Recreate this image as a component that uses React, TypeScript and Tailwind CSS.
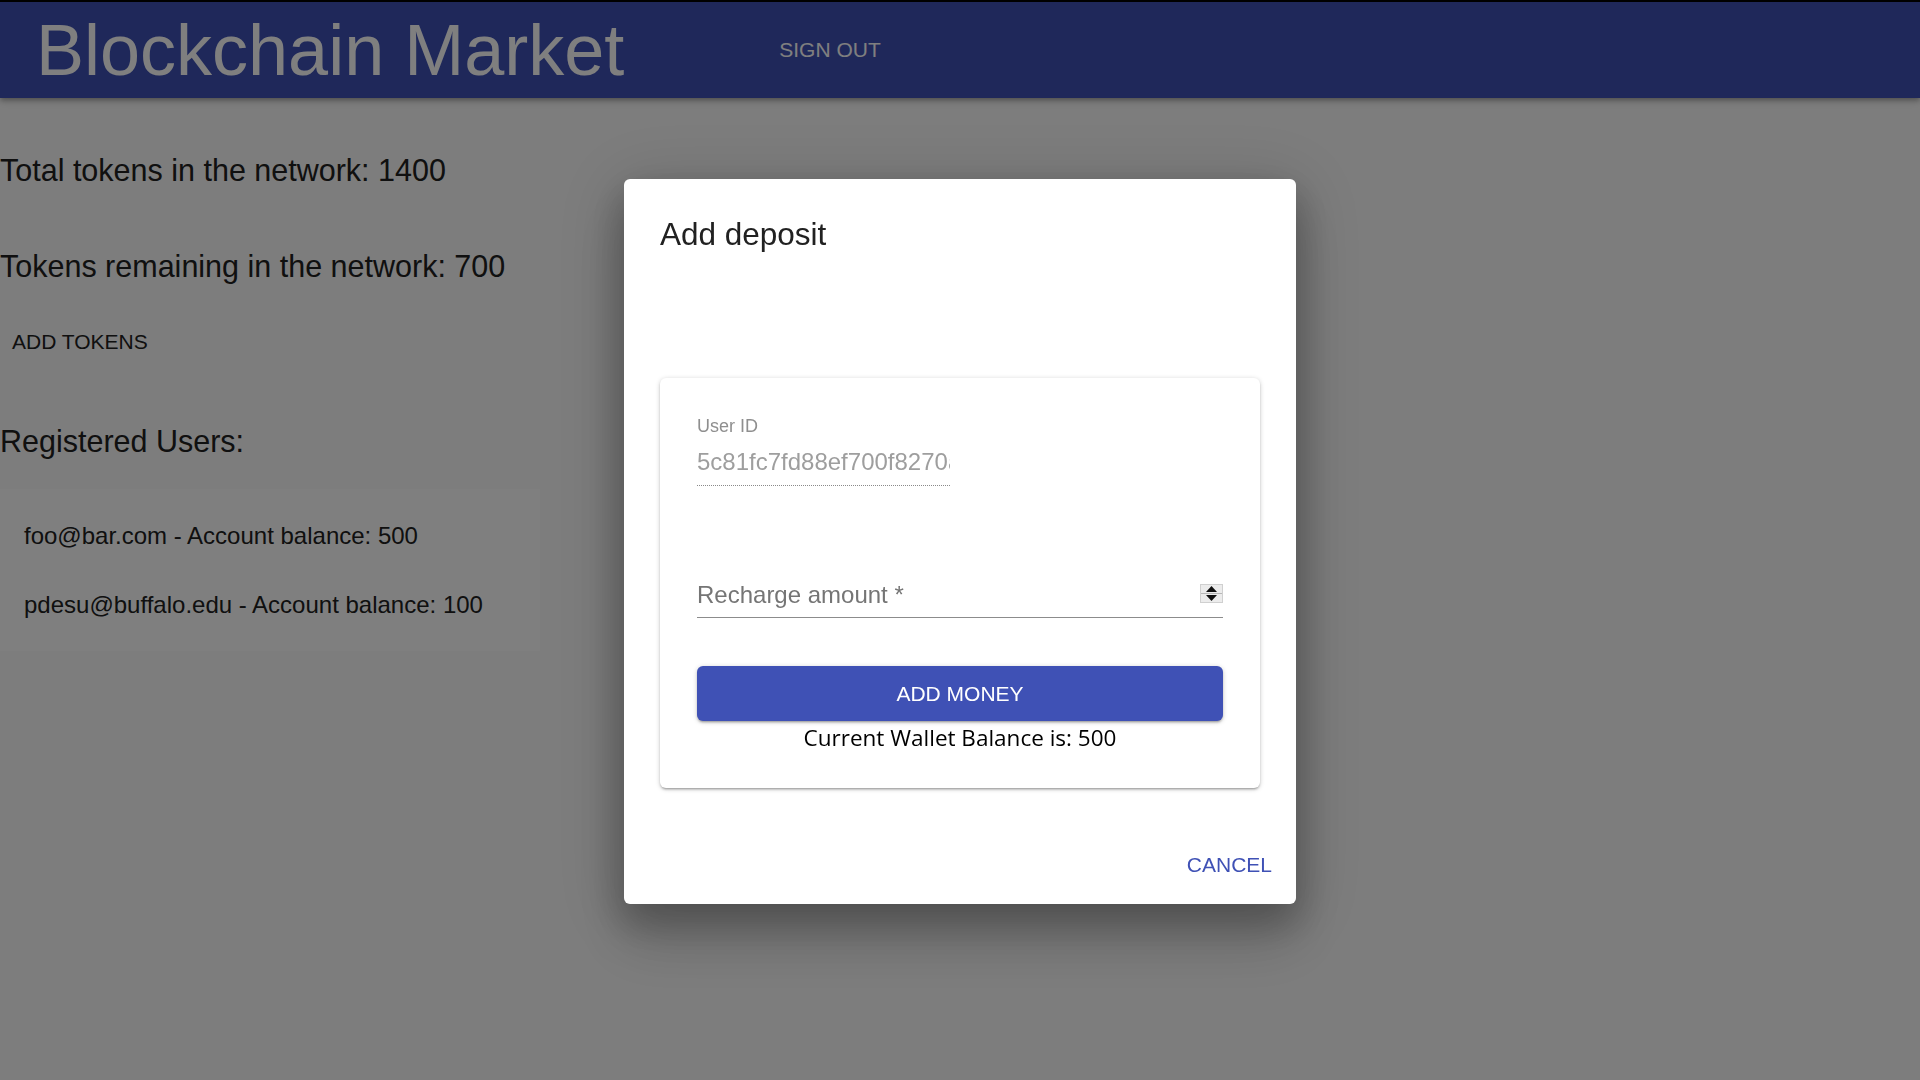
const users = [
  { email: "foo@bar.com", balance: 500 },
  { email: "pdesu@buffalo.edu", balance: 100 },
];

function Spinner() {
  return (
    <div className="flex h-[19px] w-[23px] flex-col border border-[#d0d0d0] bg-[#ececec]">
      <div className="flex flex-1 items-center justify-center border-b border-[#b8b8b8]">
        <svg width="11" height="6" viewBox="0 0 11 6">
          <path d="M5.5 0 L11 6 L0 6 Z" fill="#111" />
        </svg>
      </div>
      <div className="flex flex-1 items-center justify-center">
        <svg width="11" height="6" viewBox="0 0 11 6">
          <path d="M0 0 L11 0 L5.5 6 Z" fill="#111" />
        </svg>
      </div>
    </div>
  );
}

function DepositDialog() {
  return (
    <div className="fixed inset-0 flex items-center justify-center bg-black/50 pt-[3px]">
      <div className="flex w-[672px] flex-col rounded-[6px] bg-white px-[36px] shadow-[0_16px_36px_3px_rgba(0,0,0,0.2),0_36px_57px_4px_rgba(0,0,0,0.14),0_9px_69px_12px_rgba(0,0,0,0.12)]">
        <h2 className="pt-[31px] text-[31.5px] leading-[48px] text-[#212121]">Add deposit</h2>

        <div className="mt-[120px] flex h-[410px] flex-col rounded-[6px] bg-white px-[37px] pt-[39px] shadow-[0_1px_5px_0_rgba(0,0,0,0.2),0_2px_2px_0_rgba(0,0,0,0.14),0_3px_1px_-2px_rgba(0,0,0,0.12)]">
          <label className="text-[18px] leading-[18px] text-[#8f8f8f]">User ID</label>
          <input
            readOnly
            value="5c81fc7fd88ef700f8270a3e"
            className="mt-[12px] h-[39px] w-[253px] border-b border-dotted border-[#8a8a8a] bg-transparent pb-[8px] text-[24px] leading-[30px] text-[#9e9e9e] outline-none"
          />

          <div className="mt-[94px] flex h-[38px] items-start border-b border-[#8c8c8c]">
            <span className="flex-1 text-[24px] leading-[30px] text-[#757575]">Recharge amount *</span>
            <div className="mt-[4px]">
              <Spinner />
            </div>
          </div>

          <button className="mt-[48px] h-[55px] w-full rounded-[6px] bg-[#3f51b5] text-[21px] text-white shadow-[0_1px_5px_0_rgba(0,0,0,0.2),0_2px_2px_0_rgba(0,0,0,0.14),0_3px_1px_-2px_rgba(0,0,0,0.12)]">
            ADD MONEY
          </button>
          <p className="mt-[2px] text-center font-['Open_Sans',sans-serif] text-[22.5px] leading-[30px] text-black">
            Current Wallet Balance is: 500
          </p>
        </div>

        <div className="mt-[65px] flex justify-end pb-[27px]">
          <button className="mr-[-24px] px-[12px] text-[21px] leading-[24px] text-[#3f51b5]">CANCEL</button>
        </div>
      </div>
    </div>
  );
}

export default function App() {
  return (
    <div className="min-h-screen bg-[#fafafa] font-['Liberation_Sans',Arial,sans-serif]">
      <header className="flex h-[98px] items-center border-t-2 border-black bg-[#3f51b5] px-[36px] shadow-[0_2px_4px_-1px_rgba(0,0,0,0.2),0_4px_5px_0_rgba(0,0,0,0.14),0_1px_10px_0_rgba(0,0,0,0.12)]">
        <h1 className="text-[72px] leading-[72px] text-white">Blockchain Market</h1>
        <button className="ml-[155px] text-[21px] leading-[24px] text-white">SIGN OUT</button>
      </header>

      <main className="text-[#212121]">
        <h6 className="mt-[54px] text-[30.5px] leading-[36px]">Total tokens in the network: 1400</h6>
        <h6 className="mt-[60px] text-[30.5px] leading-[36px]">Tokens remaining in the network: 700</h6>
        <button className="mt-[46px] block px-[12px] text-[21px] leading-[24px]">ADD TOKENS</button>
        <h6 className="mt-[69px] text-[30.5px] leading-[36px]">Registered Users:</h6>
        <ul className="mt-[30px] w-[540px] bg-white py-[12px]">
          {users.map((u) => (
            <li key={u.email} className="flex h-[69px] items-center px-[24px] text-[24px] leading-[36px]">
              {u.email} - Account balance: {u.balance}
            </li>
          ))}
        </ul>
      </main>

      <DepositDialog />
    </div>
  );
}
